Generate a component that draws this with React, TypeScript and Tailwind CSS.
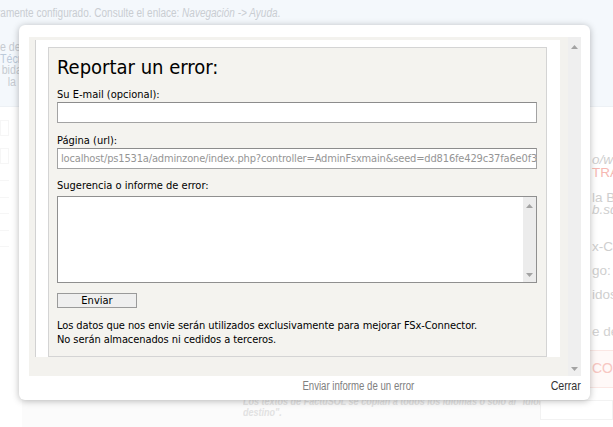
import React from "react";

function Arrow({ dir, className }: { dir: "up" | "down"; className?: string }) {
  return (
    <svg width="7" height="4" viewBox="0 0 7 4" className={className}>
      {dir === "up" ? (
        <polygon points="0,4 7,4 3.5,0" fill="#a3a3a3" />
      ) : (
        <polygon points="0,0 7,0 3.5,4" fill="#a3a3a3" />
      )}
    </svg>
  );
}

export default function App() {
  return (
    <div className="relative w-[613px] h-[427px] overflow-hidden bg-white font-['Liberation_Sans',Arial,sans-serif]">
      {/* Faded page behind the dialog */}
      <div className="h-[107px] bg-[#f4f8fc] border-b border-[#edf1f5] overflow-hidden">
        <p className="pt-[6px] -ml-[3px] whitespace-nowrap text-[12.5px] leading-[14px] text-[#c9cdd2] origin-left scale-x-[0.8]">
          ramente configurado. Consulte el enlace: <i>Navegación -&gt; Ayuda</i>.
        </p>
        <div className="mt-[22px] text-[12.5px] leading-[11.7px] whitespace-nowrap origin-left scale-x-[0.85]">
          <div className="text-[#c6cbd1]">e de la Aplicación</div>
          <div className="text-[#bccada]">Técnico</div>
          <div className="pl-[2px] text-[#c6cbd1]">bida</div>
          <div className="pl-[9px] text-[#c6cbd1]">la Base</div>
        </div>
      </div>
      <div className="flex h-[320px]">
        <div className="w-[22px] shrink-0 flex flex-col pt-[13px]">
          <div className="h-[16px] w-[9px] border border-[#f6f6f6]" />
          <div className="h-[12px]" />
          <div className="h-[16px] w-[9px] border border-[#f6f6f6]" />
          <div className="h-[17px] w-[9px] border-b border-[#f6f6f6]" />
          <div className="h-[17px] w-[9px] border-b border-[#f6f6f6]" />
          <div className="h-[16px] w-[9px] border-b border-[#f6f6f6]" />
          <div className="h-[17px] w-[9px] border-b border-[#f6f6f6]" />
          <div className="h-[16px] w-[9px] border-b border-[#f6f6f6]" />
        </div>
        <div className="flex-1 min-w-0 overflow-hidden flex flex-col">
          <div className="mt-auto h-[37px] bg-[#fbfbfb] pl-[221px] pt-[6px] text-[11px] leading-[11px] italic font-bold text-[#e2e2e2] whitespace-nowrap">
            <div className="origin-left scale-x-[0.82]">Los textos de FactuSOL se copian a todos los idiomas o sólo al "Idioma</div>
            <div className="origin-left scale-x-[0.82]">destino".</div>
          </div>
        </div>
        <div className="w-[73px] shrink-0 flex flex-col overflow-hidden">
          <div className="pl-[52px] pt-[46px] text-[13.5px] whitespace-nowrap">
            <div className="h-[13px] leading-[13px] italic text-[#cfcfcf]">o/web</div>
            <div className="h-[13px] leading-[13px] text-[#f6b8b2]">TRADUC</div>
            <div className="h-[12px]" />
            <div className="h-[13px] leading-[13px] text-[#cfcfcf]">la Base</div>
            <div className="h-[12px] leading-[12px] italic text-[#cfcfcf]">b.sql/</div>
            <div className="h-[24px]" />
            <div className="h-[14px] leading-[14px] text-[#cfcfcf]">x-Con</div>
            <div className="h-[10px]" />
            <div className="h-[14px] leading-[14px] text-[#cfcfcf]">
              go: <span className="text-[#f6b8b2]">N</span>
            </div>
            <div className="h-[10px]" />
            <div className="h-[14px] leading-[14px] text-[#cfcfcf]">idos</div>
            <div className="h-[23px]" />
            <div className="h-[14px] leading-[14px] text-[#d2d2d2]">e de</div>
          </div>
          <div className="mt-[11px] h-[38px] bg-[#fff9f8] border-y border-[#fbe7e4] pl-[52px] pt-[9px] text-[14px] leading-[16px] text-[#f8c7c2] whitespace-nowrap">
            CONT
          </div>
          <div className="mt-[12px] h-[20px] bg-white border border-[#f2f2f2]" />
        </div>
      </div>

      {/* Dialog */}
      <div className="absolute left-[19px] top-[25px] w-[571px] h-[375px] bg-white rounded-[6px] shadow-[0_1px_7px_rgba(0,0,0,0.28)] flex flex-col pl-[10px] pr-[9px] pt-[12px]">
        <div className="flex h-[339px]">
          <div className="flex-1 bg-[#f3f2ee] overflow-hidden pl-[6px] pr-[8px] pt-[3px]">
            <div className="h-[317px] bg-white border-l border-[#d2d2d2] pl-[12px] pr-[13px] pt-[7px]">
              <div className="h-[310px] bg-[#f4f3ef] border border-[#d4d4d4] pl-[8px] pr-[9px] pt-[7px] text-black font-['DejaVu_Sans_Condensed','DejaVu_Sans',sans-serif] font-stretch-condensed text-[11px]">
                <h1 className="text-[20px] leading-[24px] font-normal">Reportar un error:</h1>
                <div className="mt-[9px] leading-[13px]">Su E-mail (opcional):</div>
                <div className="mt-[1px] h-[21px] w-[480px] bg-white border border-[#a3a3a3] border-t-[#8c8c8c]" />
                <div className="mt-[11px] leading-[13px]">Página (url):</div>
                <div className="mt-[1px] h-[21px] w-[480px] bg-white border border-[#a3a3a3] border-t-[#8c8c8c] overflow-hidden pl-[3px] text-[#959595] leading-[19px] whitespace-nowrap tracking-[-0.16px]">
                  localhost/ps1531a/adminzone/index.php?controller=AdminFsxmain&amp;seed=dd816fe429c37fa6e0f3b21
                </div>
                <div className="mt-[10px] leading-[13px]">Sugerencia o informe de error:</div>
                <div className="mt-[4px] h-[87px] w-[480px] bg-white border border-[#8f8f8f] flex justify-end">
                  <div className="w-[13px] h-full bg-[#ececec] flex flex-col items-center justify-between pt-[7px] pb-[5px]">
                    <Arrow dir="up" />
                    <Arrow dir="down" />
                  </div>
                </div>
                <div className="mt-[10px] h-[15px] w-[80px] bg-[#efefef] border border-[#9a9a9a] flex items-center justify-center leading-[13px]">
                  Enviar
                </div>
                <div className="mt-[11px] leading-[14px] tracking-[-0.08px]">
                  <div>Los datos que nos envie serán utilizados exclusivamente para mejorar FSx-Connector.</div>
                  <div>No serán almacenados ni cedidos a terceros.</div>
                </div>
              </div>
            </div>
          </div>
          <div className="w-[13px] bg-[#efefef] flex flex-col items-center justify-between pt-[8px] pb-[5px]">
            <Arrow dir="up" />
            <Arrow dir="down" />
          </div>
        </div>
        <div className="h-[24px] flex justify-end items-start pt-[3px] whitespace-nowrap">
          <span className="inline-block mr-[130px] text-[12.5px] leading-[14px] text-[#808080] origin-right scale-x-[0.77]">
            Enviar informe de un error
          </span>
          <span className="inline-block text-[13px] leading-[14px] text-[#333] origin-right scale-x-[0.82]">Cerrar</span>
        </div>
      </div>
    </div>
  );
}
